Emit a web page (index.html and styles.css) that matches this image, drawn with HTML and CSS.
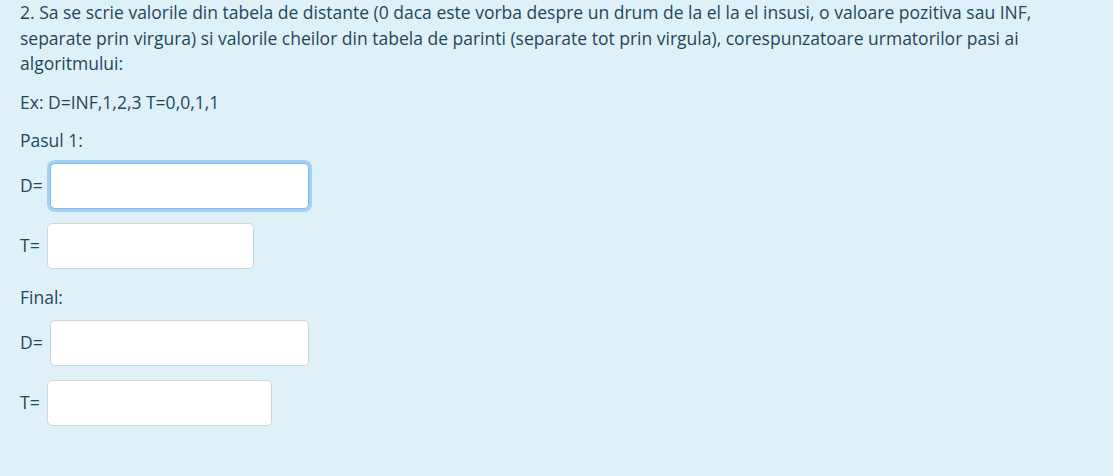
FILE: index.html
```html
<!DOCTYPE html>
<html lang="ro">
<head>
<meta charset="utf-8">
<link rel="stylesheet" href="styles.css">
</head>
<body>
<div class="formulation">
  <p class="para">2. Sa se scrie valorile din tabela de distante (0 daca este vorba despre un drum de la el la el insusi, o valoare pozitiva sau INF, separate prin virgura) si valorile cheilor din tabela de parinti (separate tot prin virgula), corespunzatoare urmatorilor pasi ai algoritmului:</p>
  <p class="para">Ex: D=INF,1,2,3 T=0,0,1,1</p>
  <p class="step">Pasul 1:</p>
  <div class="row"><span class="lbl">D=</span><input class="field field-focus w-259" type="text"></div>
  <div class="row row-last"><span class="lbl">T=</span><input class="field w-207" type="text"></div>
  <p class="step">Final:</p>
  <div class="row"><span class="lbl">D=</span><input class="field w-259" type="text"></div>
  <div class="row"><span class="lbl">T=</span><input class="field w-225" type="text"></div>
</div>
</body>
</html>
```
FILE: styles.css
```css
html, body {
  margin: 0;
  padding: 0;
  background: #def1f8;
}
.formulation {
  background: #def1f8;
  min-height: 476px;
  box-sizing: border-box;
  padding: 0 60px 0 20px;
  font-family: "Open Sans", "Noto Sans", sans-serif;
  font-size: 17.5px;
  line-height: 25.5px;
  color: #1f475c;
}
.para {
  margin: 0 0 13px;
}
.step {
  margin: 0 0 9px;
}
.row {
  display: flex;
  align-items: center;
  margin-bottom: 14px;
}
.row-last {
  margin-bottom: 16.5px;
}
.lbl {
  margin-right: 7px;
}
.field {
  box-sizing: border-box;
  height: 46px;
  border: 1px solid #ced4da;
  border-radius: 5px;
  background: #fff;
  padding: 6px 12px;
  font: inherit;
  outline: none;
}
.field-focus {
  border-color: #7ab8ee;
  box-shadow: 0 0 0 3px #a6d0ef;
}
.w-259 { width: 259px; }
.w-207 { width: 207px; }
.w-225 { width: 225px; }
```
